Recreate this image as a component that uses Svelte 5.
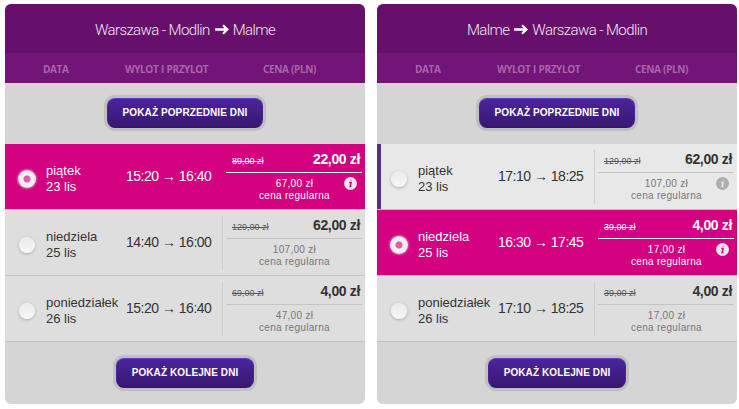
<script>
  const columns = ['DATA', 'WYLOT I PRZYLOT', 'CENA (PLN)'];

  let directions = $state([
    {
      from: 'Warszawa - Modlin',
      to: 'Malme',
      selected: 0,
      hovered: -1,
      flights: [
        { day: 'piątek', date: '23 lis', start: '15:20', end: '16:40', old: '89,00', price: '22,00', regular: '67,00' },
        { day: 'niedziela', date: '25 lis', start: '14:40', end: '16:00', old: '129,00', price: '62,00', regular: '107,00' },
        { day: 'poniedziałek', date: '26 lis', start: '15:20', end: '16:40', old: '69,00', price: '4,00', regular: '47,00' }
      ]
    },
    {
      from: 'Malme',
      to: 'Warszawa - Modlin',
      selected: 1,
      hovered: 0,
      flights: [
        { day: 'piątek', date: '23 lis', start: '17:10', end: '18:25', old: '129,00', price: '62,00', regular: '107,00' },
        { day: 'niedziela', date: '25 lis', start: '16:30', end: '17:45', old: '39,00', price: '4,00', regular: '17,00' },
        { day: 'poniedziałek', date: '26 lis', start: '17:10', end: '18:25', old: '39,00', price: '4,00', regular: '17,00' }
      ]
    }
  ]);
</script>

<main>
  {#each directions as dir}
    <section class="panel">
      <h2>
        <span>{dir.from}</span>
        <svg class="arrow" width="14" height="12" viewBox="0 0 14 12">
          <path d="M0 5.5H12M8 1.3L12.3 5.5L8 9.7" />
        </svg>
        <span>{dir.to}</span>
      </h2>
      <div class="columns">
        {#each columns as column}
          <span>{column}</span>
        {/each}
      </div>

      <div class="more prev"><button>POKAŻ POPRZEDNIE DNI</button></div>

      {#each dir.flights as flight, i}
        <label class="flight" class:selected={dir.selected === i} class:hovered={dir.hovered === i}>
          <input type="radio" value={i} bind:group={dir.selected} />
          <div class="date">{flight.day}<br />{flight.date}</div>
          <div class="time">{flight.start} → {flight.end}</div>
          <div class="price">
            <div class="top">
              <del>{flight.old} zł</del>
              <strong>{flight.price} zł</strong>
            </div>
            <div class="regular">
              {flight.regular} zł<br />cena regularna
              {#if dir.selected === i || dir.hovered === i}
                <svg class="info" width="13" height="13" viewBox="0 0 13 13">
                  <circle cx="6.5" cy="6.5" r="6.5" />
                  <path d="M5.2 5.4H7.1L6.1 9.5H7.4M7.1 2.8L7 3.4" />
                </svg>
              {/if}
            </div>
          </div>
        </label>
      {/each}

      <div class="more next"><button>POKAŻ KOLEJNE DNI</button></div>
    </section>
  {/each}
</main>

<style>
  :global(body) {
    background: #fff;
  }

  main {
    display: flex;
    gap: 12px;
    padding: 4px 0 0 5px;
    width: 732px;
    font-family: "Liberation Sans", Arial, sans-serif;
    color: #333;
  }

  .panel {
    width: 360px;
    height: 400px;
    border-radius: 6px;
    background: #d5d5d5;
    overflow: hidden;
  }

  h2 {
    display: flex;
    align-items: center;
    justify-content: center;
    gap: 4px;
    height: 49px;
    margin: 0;
    padding-top: 2px;
    box-sizing: border-box;
    background: #660f6b;
    color: #f3e6f3;
    font: 300 15px Roboto, sans-serif;
    letter-spacing: -0.6px;
  }

  .arrow {
    margin-left: 1px;
    fill: none;
    stroke: #fff;
    stroke-width: 2.3;
  }

  .columns {
    display: grid;
    grid-template-columns: 82px 138px 1fr;
    align-items: center;
    height: 30px;
    padding: 2px 0 0 38px;
    box-sizing: border-box;
    background: #731478;
    color: #a865ab;
    font: 700 10px "Open Sans", sans-serif;
    letter-spacing: -0.4px;
    word-spacing: 0.5px;
  }

  .more {
    display: flex;
    justify-content: center;
    box-sizing: border-box;
  }

  .prev {
    height: 61px;
    padding-top: 15px;
  }

  .next {
    padding-top: 16px;
  }

  button {
    width: 156px;
    height: 30px;
    padding: 0 0 2px;
    border: 1px solid #49249a;
    border-top-color: #6037c8;
    border-bottom-color: #351568;
    border-radius: 8px;
    background: linear-gradient(#4b249c, #371870);
    box-shadow: 0 0 0 3px #bfbfbf;
    color: #fff;
    font: bold 10px "Liberation Sans", Arial, sans-serif;
    letter-spacing: 0.1px;
  }

  .next button {
    width: 138px;
  }

  .flight {
    display: grid;
    grid-template-columns: 41px 80px 96px 1fr;
    height: 66px;
    box-sizing: border-box;
    border-bottom: 1px solid #c2c2c2;
    background: #dedede;
    font-size: 13px;
  }

  .hovered {
    background: #e8e8e8;
    box-shadow: inset 4px 0 #5b2c86;
  }

  .selected {
    background: #d3007f;
    color: #fff;
    box-shadow: none;
  }

  input {
    appearance: none;
    width: 16px;
    height: 16px;
    margin: 27px 0 0 14px;
    border-radius: 50%;
    background: linear-gradient(#eaeaea, #f7f7f7);
    box-shadow: 0 1px 3px #aaa;
  }

  .selected input {
    width: 18px;
    height: 18px;
    margin: 26px 0 0 13px;
    background: radial-gradient(circle, #df5ca6 0 3px, #f1eeef 4px);
    box-shadow: 0 0 3px #f4cce2;
  }

  .date {
    padding-top: 19px;
    line-height: 16px;
  }

  .time {
    padding-top: 24px;
    font-size: 14px;
    line-height: 16px;
    letter-spacing: -0.5px;
    white-space: nowrap;
  }

  .price {
    height: 54px;
    margin-top: 6px;
    padding: 0 3px 0 3px;
    border-left: 1px solid #cfcfcf;
  }

  .selected .price {
    border-color: transparent;
  }

  .top {
    display: flex;
    justify-content: space-between;
    height: 22px;
    padding: 0 2px 0 6px;
    border-bottom: 1px solid #c5c5c5;
  }

  .selected .top {
    border-color: #fff;
  }

  del {
    padding-top: 5px;
    font-size: 9px;
    line-height: 12px;
    color: #555;
  }

  .selected del {
    color: #fff;
  }

  strong {
    padding-top: 1px;
    font-size: 14px;
    line-height: 16px;
    letter-spacing: -0.35px;
  }

  .regular {
    position: relative;
    padding: 5px 0 0 1px;
    text-align: center;
    font-size: 10px;
    line-height: 12px;
    letter-spacing: 0.3px;
    color: #777;
  }

  .selected .regular {
    color: #fff;
  }

  .info {
    position: absolute;
    top: 4px;
    right: 5px;
    fill: #adadad;
  }

  .info path {
    fill: none;
    stroke: #e8e8e8;
    stroke-width: 1.5;
  }

  .selected .info {
    fill: #fbe3f1;
  }

  .selected .info path {
    stroke: #d3007f;
  }
</style>
